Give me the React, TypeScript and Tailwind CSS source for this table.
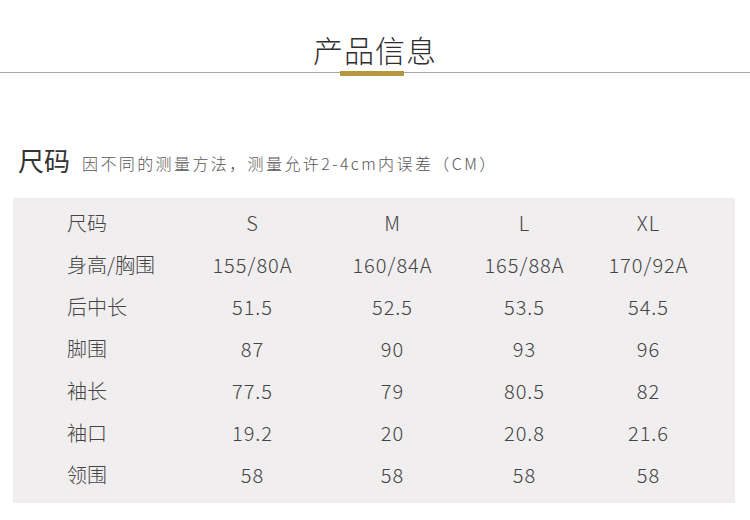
import React from "react";

const rows: string[][] = [
  ["尺码", "S", "M", "L", "XL"],
  ["身高/胸围", "155/80A", "160/84A", "165/88A", "170/92A"],
  ["后中长", "51.5", "52.5", "53.5", "54.5"],
  ["脚围", "87", "90", "93", "96"],
  ["袖长", "77.5", "79", "80.5", "82"],
  ["袖口", "19.2", "20", "20.8", "21.6"],
  ["领围", "58", "58", "58", "58"],
];

const App: React.FC = () => {
  return (
    <div
      className="w-[750px] h-[520px] bg-white overflow-hidden"
      style={{ fontFamily: '"Noto Sans CJK SC", "Noto Sans", sans-serif' }}
    >
      {/* header */}
      <div className="relative h-[77px]">
        <div className="pt-[28px] text-center text-[30px] leading-[42px] tracking-[1px] font-light text-[#2e2e2e]">
          产品信息
        </div>
        <div className="absolute left-0 right-0 top-[72px] h-px bg-[#a8a8a8]" />
        <div className="absolute left-[340px] top-[71px] w-[64px] h-[5px] bg-[#b5973f]" />
      </div>

      {/* size heading */}
      <div className="flex items-end mt-[65px] pl-[18px] h-[36px]">
        <span className="text-[26px] leading-[36px] text-[#333333]">尺码</span>
        <span className="ml-[12px] mb-[4px] text-[16px] leading-[22px] tracking-[2.4px] font-light text-[#555555]">
          因不同的测量方法，测量允许2-4cm内误差（CM）
        </span>
      </div>

      {/* table */}
      <div className="mx-[13px] mt-[20px] w-[722px] bg-[#f1eeef] pt-[4px] pb-[7px] pl-[54px]">
        {rows.map((r, i) => (
          <div
            key={i}
            className="grid grid-cols-[115px_140px_140px_124px_124px] h-[42px] items-center text-[20px] font-light text-[#444444]"
          >
            <div>{r[0]}</div>
            {r.slice(1).map((c, j) => (
              <div key={j} className="text-center tracking-[1px] pl-[1px]">
                {c}
              </div>
            ))}
          </div>
        ))}
      </div>
    </div>
  );
};

export default App;
